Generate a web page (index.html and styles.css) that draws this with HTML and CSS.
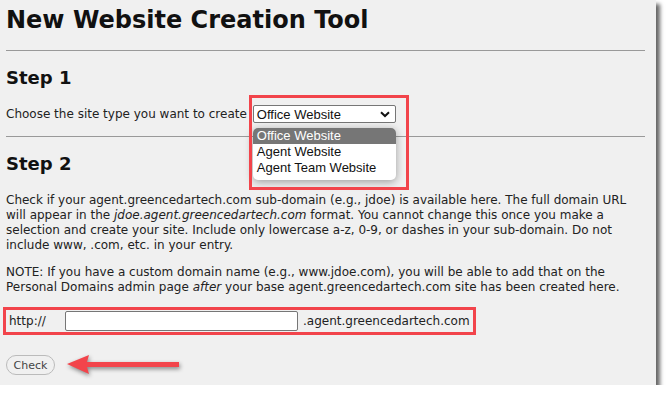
FILE: index.html
```html
<!DOCTYPE html>
<html lang="en">
<head>
    <meta charset="UTF-8">
    <meta name="viewport" content="width=device-width, initial-scale=1.0">
    <title>New Website Creation Tool</title>
    <link rel="stylesheet" href="styles.css">
</head>
<body>

    <div class="page">
        <h1>New Website Creation Tool</h1>
        <hr>

        <!-- Step 1 -->
        <h2>Step 1</h2>
        <div class="row">
            <span>Choose the site type you want to create</span>
            <div class="select-wrap">
                <div class="select">
                    <span>Office Website</span>
                    <svg width="10" height="7" viewBox="0 0 10 7"><path d="M1 1.2 L5 5 L9 1.2" fill="none" stroke="#111" stroke-width="2"/></svg>
                </div>
                <div class="select-list">
                    <div class="option selected">Office Website</div>
                    <div class="option">Agent Website</div>
                    <div class="option">Agent Team Website</div>
                </div>
                <div class="callout"></div>
            </div>
        </div>
        <hr>

        <!-- Step 2 -->
        <h2 class="step2">Step 2</h2>
        <p>Check if your agent.greencedartech.com sub-domain (e.g., jdoe) is available here. The full domain URL will appear in the <i>jdoe.agent.greencedartech.com</i> format. You cannot change this once you make a selection and create your site. Include only lowercase a-z, 0-9, or dashes in your sub-domain. Do not include www, .com, etc. in your entry.</p>
        <p>NOTE: If you have a custom domain name (e.g., www.jdoe.com), you will be able to add that on the Personal Domains admin page <i>after</i> your base agent.greencedartech.com site has been created here.</p>

        <div class="domain-row">
            <span class="prefix">http://</span>
            <input type="text" class="domain-input">
            <span class="suffix">.agent.greencedartech.com</span>
        </div>

        <div class="check-row">
            <button class="check-btn">Check</button>
            <svg class="arrow" width="120" height="26" viewBox="0 0 120 26">
                <path d="M2 12 L24 3 L22 10 L114 10 L114 15 L22 15 L24 22 Z" fill="#f2444b"/>
            </svg>
        </div>
    </div>

</body>
</html>
```

FILE: styles.css
```css
body {
    margin: 0;
    background-color: #fff;
    font-family: "DejaVu Sans", Verdana, sans-serif;
    font-size: 12px;
    color: #222;
}

.page {
    width: 656px;
    height: 385px;
    box-sizing: border-box;
    padding: 0 11px 0 6px;
    background-color: #f0f0f0;
    box-shadow: 4px 4px 4px rgba(0,0,0,0.6);
    overflow: hidden;
}

h1 {
    margin: 0;
    padding-top: 5px;
    font-size: 24px;
    line-height: 30px;
    color: #111;
}

hr {
    border: none;
    border-top: 1px solid #999;
    margin: 0;
}

.page > hr:first-of-type {
    margin-top: 15px;
}

h2 {
    margin: 16px 0 16px 0;
    font-size: 18px;
    line-height: 22px;
    color: #111;
}

h2.step2 {
    margin: 16px 0 18px 0;
}

.row {
    display: flex;
    align-items: center;
    gap: 6px;
    margin-bottom: 13px;
}

.select-wrap {
    position: relative;
}

.select {
    display: flex;
    align-items: center;
    justify-content: space-between;
    width: 143px;
    height: 18px;
    box-sizing: border-box;
    padding: 0 5px 0 3px;
    background-color: #fff;
    border: 1px solid #767676;
    border-radius: 2px;
    font-family: "Liberation Sans", Arial, sans-serif;
    font-size: 13px;
    color: #111;
}

.select-list {
    position: absolute;
    left: 0;
    top: 23px;
    width: 143px;
    padding-bottom: 4px;
    background-color: #fff;
    border-radius: 5px;
    overflow: hidden;
    box-shadow: 0px 2px 8px 0px rgba(0,0,0,0.35);
    font-family: "Liberation Sans", Arial, sans-serif;
    font-size: 13px;
    color: #111;
    z-index: 2;
}

.option {
    padding: 0 4px;
    line-height: 16px;
}

.option.selected {
    background-color: #767676;
    color: #fff;
}

/* red annotation box round the select */
.callout {
    position: absolute;
    left: -4px;
    top: -10px;
    width: 154px;
    height: 89px;
    border: 3px solid #f2444b;
    z-index: 3;
}

p {
    margin: 0 0 12px 0;
    line-height: 15px;
    color: #222;
}

.domain-row {
    display: flex;
    align-items: center;
    width: 464px;
    height: 22px;
    margin: 8px 0 0 -3px;
    padding: 0 0 0 3px;
    border: 3px solid #f2444b;
}

.prefix {
    width: 56px;
}

.domain-input {
    width: 233px;
    height: 20px;
    box-sizing: border-box;
    margin: 0;
    border: 1px solid #767676;
    border-radius: 2px;
    background-color: #fff;
    padding: 0;
}

.suffix {
    margin-left: 5px;
}

.check-row {
    display: flex;
    align-items: center;
    gap: 10px;
    margin-top: 17px;
}

.check-btn {
    width: 49px;
    height: 20px;
    padding: 0;
    font-family: "DejaVu Sans", Verdana, sans-serif;
    font-size: 11px;
    color: #444;
    background-color: #f0f0f0;
    border: 1px solid #bbb;
    border-radius: 10px;
}

.arrow {
    filter: drop-shadow(1px 2px 2px rgba(0,0,0,0.45));
}
```
